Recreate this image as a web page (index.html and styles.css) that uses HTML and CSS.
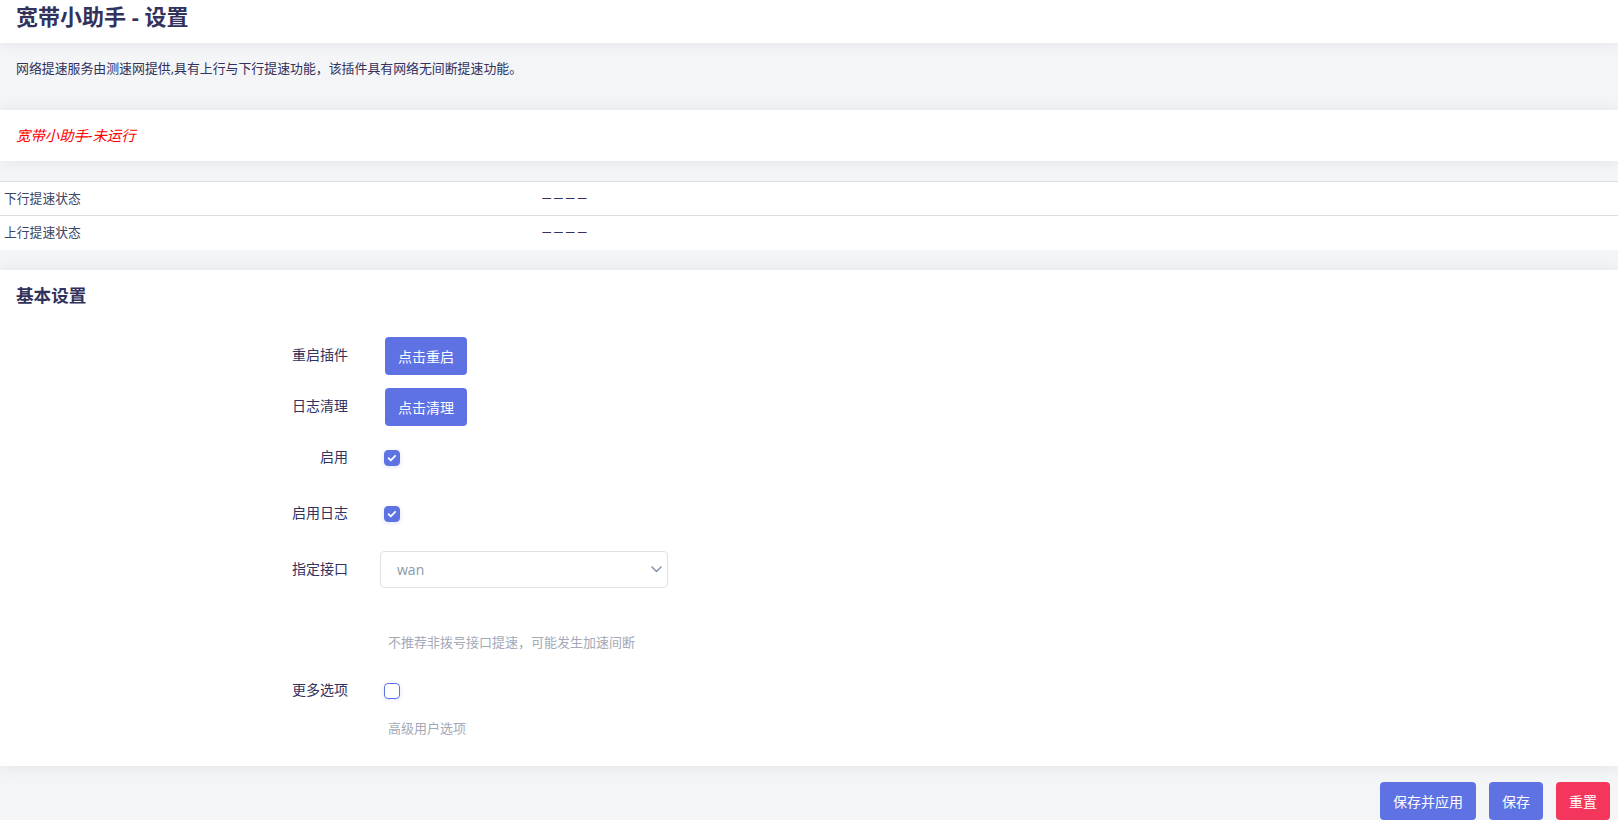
FILE: index.html
```html
<!DOCTYPE html>
<html lang="zh-CN">
<head>
    <meta charset="UTF-8">
    <meta name="viewport" content="width=device-width, initial-scale=1.0">
    <title>宽带小助手 - 设置</title>
    <link rel="stylesheet" href="styles.css">
</head>
<body>
    <header class="map-head">
        <h2>宽带小助手 - 设置</h2>
    </header>

    <div class="map-desc">网络提速服务由测速网提供,具有上行与下行提速功能，该插件具有网络无间断提速功能。</div>

    <div class="panel status-panel">
        <p class="status-off">宽带小助手-未运行</p>
    </div>

    <table class="speed-table">
        <tr>
            <td class="col-name">下行提速状态</td>
            <td class="col-value">— — — —</td>
        </tr>
        <tr>
            <td class="col-name">上行提速状态</td>
            <td class="col-value">— — — —</td>
        </tr>
    </table>

    <div class="panel settings">
        <h3>基本设置</h3>

        <div class="field-row">
            <label class="field-label">重启插件</label>
            <div class="field"><button class="btn btn-primary btn-inline">点击重启</button></div>
        </div>

        <div class="field-row">
            <label class="field-label">日志清理</label>
            <div class="field"><button class="btn btn-primary btn-inline">点击清理</button></div>
        </div>

        <div class="field-row check-row">
            <label class="field-label">启用</label>
            <div class="field">
                <span class="check checked">
                    <svg width="10" height="10" viewBox="0 0 10 10"><path d="M1.6 5.2l2.2 2.2 4.4-4.6" fill="none" stroke="#fff" stroke-width="1.8" stroke-linecap="round" stroke-linejoin="round"/></svg>
                </span>
            </div>
        </div>

        <div class="field-row check-row">
            <label class="field-label">启用日志</label>
            <div class="field">
                <span class="check checked">
                    <svg width="10" height="10" viewBox="0 0 10 10"><path d="M1.6 5.2l2.2 2.2 4.4-4.6" fill="none" stroke="#fff" stroke-width="1.8" stroke-linecap="round" stroke-linejoin="round"/></svg>
                </span>
            </div>
        </div>

        <div class="field-row select-row">
            <label class="field-label">指定接口</label>
            <div class="field">
                <div class="select">
                    <span>wan</span>
                    <svg width="11" height="7" viewBox="0 0 11 7"><path d="M1 1l4.5 4.5L10 1" fill="none" stroke="#8898aa" stroke-width="1.6" stroke-linecap="round" stroke-linejoin="round"/></svg>
                </div>
            </div>
        </div>
        <div class="field-desc hint-far">不推荐非拨号接口提速，可能发生加速间断</div>

        <div class="field-row more-row">
            <label class="field-label">更多选项</label>
            <div class="field">
                <span class="check"></span>
            </div>
        </div>
        <div class="field-desc">高级用户选项</div>
    </div>

    <footer class="page-actions">
        <button class="btn btn-primary">保存并应用</button>
        <button class="btn btn-primary">保存</button>
        <button class="btn btn-danger">重置</button>
    </footer>
</body>
</html>
```

FILE: styles.css
```css
html, body {
    overflow: hidden;
}

body {
    margin: 0;
    background: #f4f5f7;
    color: #32325d;
    font-family: "Open Sans", "Noto Sans CJK SC", sans-serif;
    font-size: 14px;
}

.panel {
    background: #fff;
    box-shadow: 0 0 14px rgba(136, 152, 170, 0.18);
}

.map-head {
    background: #fff;
    height: 43px;
    box-sizing: border-box;
    padding: 4px 16px 0;
    box-shadow: 0 0 14px rgba(136, 152, 170, 0.18);
}

.map-head h2 {
    margin: 0;
    font-size: 22px;
    line-height: 24px;
    font-weight: bold;
}

.map-desc {
    height: 67px;
    box-sizing: border-box;
    padding: 16px 16px 0;
    font-size: 12.9px;
    line-height: 18px;
}

.status-panel {
    padding: 16px 16px 15px;
}

.status-off {
    margin: 0;
    color: #ff0000;
    font-style: italic;
    font-size: 14.4px;
    line-height: 20px;
}

.speed-table {
    width: 100%;
    margin-top: 20px;
    border-collapse: collapse;
    background: #fff;
    font-size: 12.8px;
    color: #3c4668;
}

.speed-table td {
    height: 34px;
    box-sizing: border-box;
    padding: 0 4px 3px;
    border-top: 1px solid #dcdee2;
    vertical-align: middle;
}

.speed-table .col-name {
    width: 538px;
}

.speed-table .col-value {
    color: #32325d;
    font-size: 9.4px;
    font-weight: bold;
}

.settings {
    margin-top: 20px;
    padding: 13px 0 28px;
}

.settings h3 {
    margin: 0 16px 30px;
    font-size: 17.6px;
    line-height: 24px;
    font-weight: bold;
}

.field-row {
    display: flex;
    align-items: center;
    min-height: 38px;
    margin-bottom: 13px;
}

.field-row.check-row {
    margin-bottom: 18px;
}

.field-row.select-row {
    margin-bottom: 0;
}

.field-row.more-row {
    margin-top: 20px;
    margin-bottom: 8px;
}

.field-label {
    width: 348px;
    padding-bottom: 4px;
    text-align: right;
    font-size: 14px;
}

.field {
    margin-left: 32px;
    display: flex;
    align-items: center;
}

.field-desc {
    padding-left: 388px;
    font-size: 13px;
    line-height: 20px;
    color: #a4a9b7;
}

.field-desc.hint-far {
    margin-top: 43px;
}

.btn {
    border: none;
    border-radius: 4px;
    height: 38px;
    padding: 0 13px;
    color: #fff;
    font-family: inherit;
    font-size: 14px;
    cursor: pointer;
}

.btn-inline {
    margin-left: 5px;
}

.btn-primary {
    background: #5e72e4;
}

.btn-danger {
    background: #f5365c;
}

.check {
    margin-left: 4px;
    width: 16px;
    height: 16px;
    box-sizing: border-box;
    border: 1px solid #5e72e4;
    border-radius: 4px;
    background: #fff;
    display: flex;
    align-items: center;
    justify-content: center;
    box-shadow: 0 1px 4px rgba(94, 114, 228, 0.2);
}

.check.checked {
    background: #5e72e4;
}

.select {
    width: 288px;
    height: 37px;
    box-sizing: border-box;
    border: 1px solid #dee2e6;
    border-radius: 4px;
    padding: 0 5px 0 16px;
    display: flex;
    align-items: center;
    justify-content: space-between;
    color: #8898aa;
    font-size: 14px;
}

.page-actions {
    display: flex;
    justify-content: flex-end;
    gap: 13px;
    padding: 16px 8px 0;
}
```
